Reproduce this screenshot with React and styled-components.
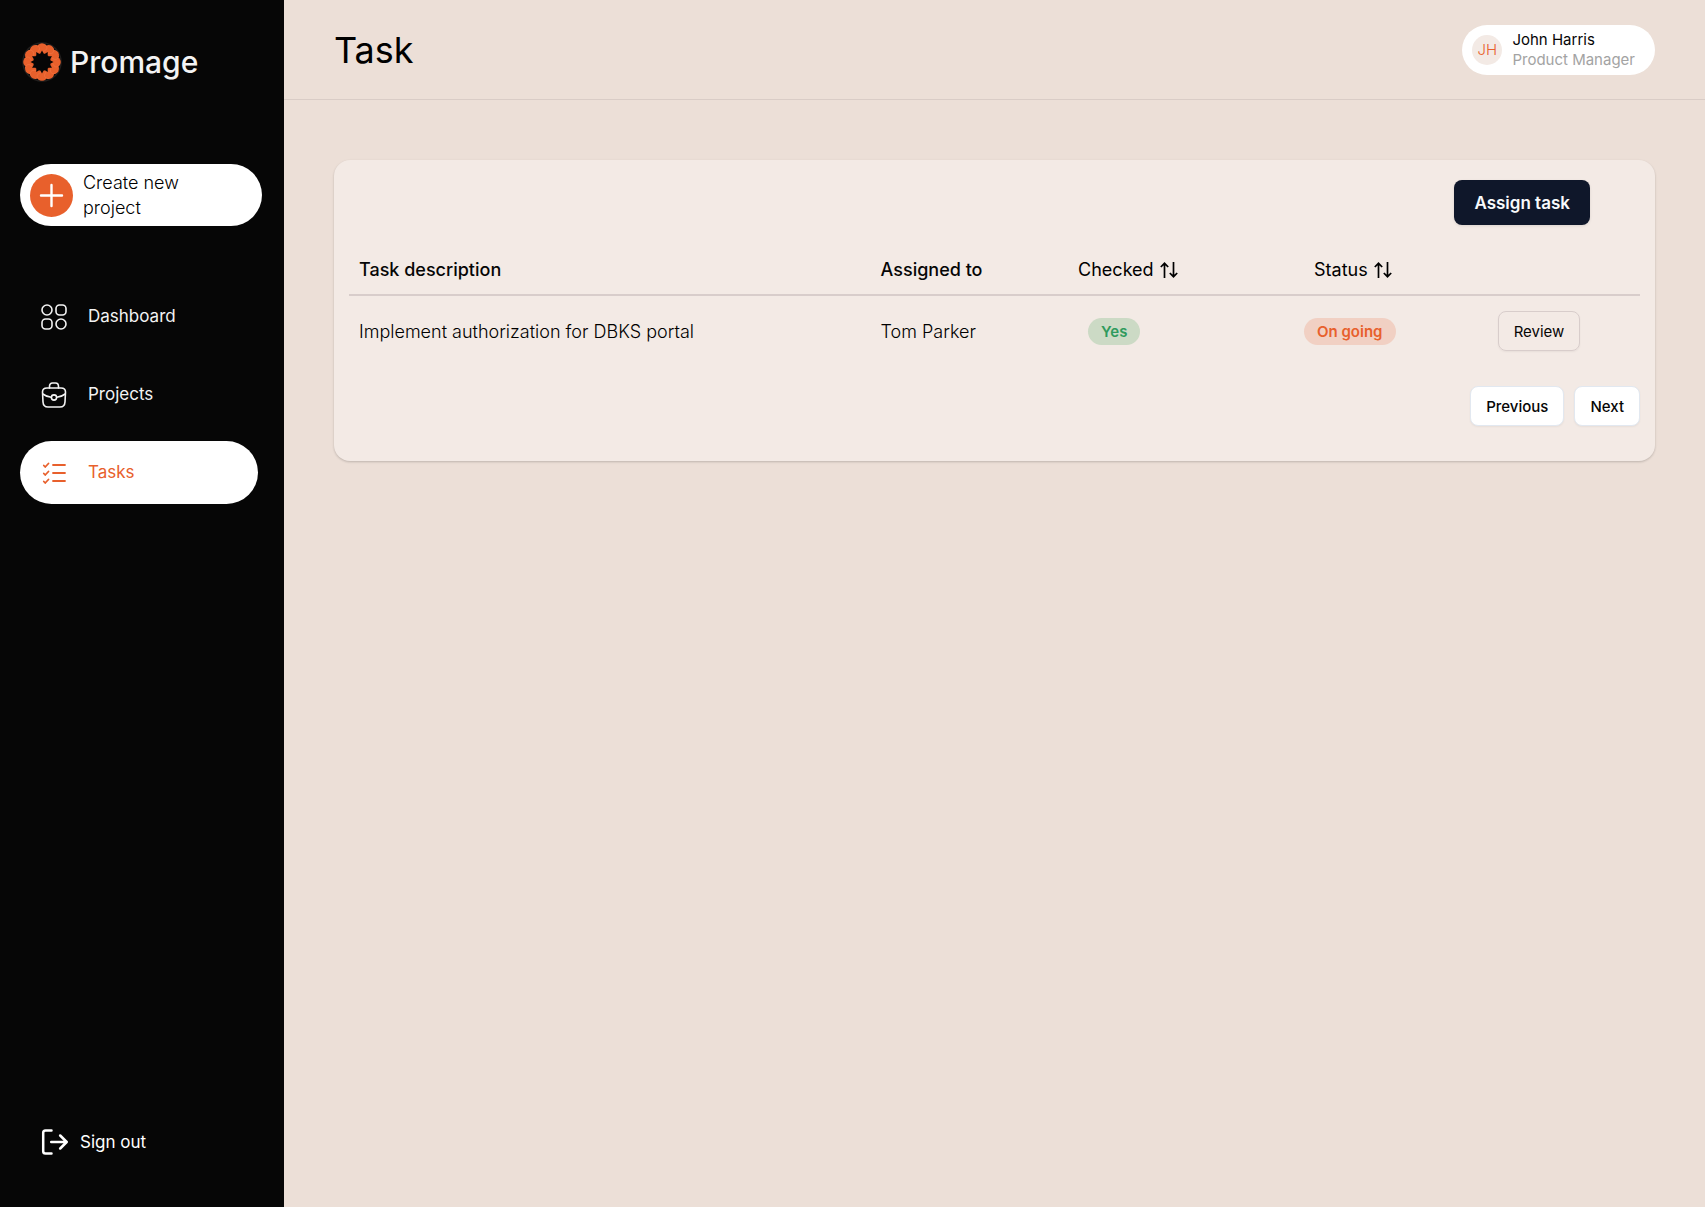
import React from "react";
import styled, { createGlobalStyle } from "styled-components";

const GlobalStyle = createGlobalStyle`
  *, *::before, *::after { box-sizing: border-box; }
  body {
    margin: 0;
    background: #ecdfd7;
    color: #060606;
    font-family: Inter, "Liberation Sans", sans-serif;
    font-size: 18px;
    font-weight: 400;
  }
  button { font-family: inherit; cursor: pointer; }
  h1, p { margin: 0; }
`;

const Layout = styled.div`
  display: grid;
  grid-template-columns: 284px minmax(0, 1fr);
  min-height: 100vh;
`;

const Sidebar = styled.aside`
  display: flex;
  flex-direction: column;
  padding: 40px 22px 43px 20px;
  background: #060606;
  color: #f3f3f3;
`;

const Brand = styled.a`
  display: flex;
  align-items: center;
  gap: 6px;
  height: 44px;
  color: inherit;
  font-size: 30px;
  font-weight: 500;
  text-decoration: none;
`;

const CreateButton = styled.button`
  display: flex;
  align-items: center;
  gap: 10px;
  height: 62px;
  margin-top: 80px;
  padding: 0 70px 0 10px;
  border: 0;
  border-radius: 31px;
  background: #fff;
  color: #000;
  font-size: 18px;
  line-height: 25px;
  font-weight: 300;
  text-align: left;

  svg { flex: none; }
`;

const Nav = styled.nav`
  display: flex;
  flex-direction: column;
  gap: 15px;
  margin-top: 59px;
`;

const NavLink = styled.a`
  display: flex;
  align-items: center;
  gap: 20px;
  height: 63px;
  margin-right: 4px;
  padding: 0 20px;
  border-radius: 32px;
  background: ${(p) => (p.$active ? "#fff" : "transparent")};
  color: ${(p) => (p.$active ? "#e8602c" : "#f3f3f3")};
  font-size: 17px;
  line-height: 25px;
  text-decoration: none;
`;

const SignOut = styled.button`
  display: flex;
  align-items: center;
  gap: 12px;
  margin-top: auto;
  padding: 8px 20px;
  border: 0;
  background: none;
  color: #fff;
  font-size: 17px;
`;

const Header = styled.header`
  display: flex;
  align-items: center;
  justify-content: space-between;
  height: 100px;
  padding: 0 50px;
  border-bottom: 1px solid #d9ccc6;
`;

const Title = styled.h1`
  color: #000;
  font-size: 36px;
  font-weight: 400;
`;

const User = styled.div`
  display: flex;
  align-items: center;
  gap: 10px;
  height: 50px;
  padding: 0 20px 0 10px;
  border-radius: 25px;
  background: #fff;
  font-size: 15px;
  line-height: 20px;
`;

const Avatar = styled.span`
  display: grid;
  place-items: center;
  width: 30px;
  height: 30px;
  border-radius: 50%;
  background: #f3eae5;
  color: #e8602c;
  font-weight: 300;
`;

const Role = styled.p`
  color: #a3a3a3;
`;

const Card = styled.section`
  margin: 60px 50px;
  padding: 20px 15px 35px;
  border-radius: 16px;
  background: #f3eae5;
  box-shadow: 0 1px 3px rgba(0, 0, 0, 0.1), 0 1px 2px rgba(0, 0, 0, 0.1);
`;

const Actions = styled.div`
  display: flex;
  justify-content: flex-end;
  padding-right: 50px;
`;

const AssignButton = styled.button`
  height: 45px;
  padding: 0 20px;
  border: 0;
  border-radius: 8px;
  background: #0f172a;
  color: #f8fafc;
  font-size: 17px;
  font-weight: 600;
  box-shadow: 0 1px 3px rgba(0, 0, 0, 0.1);
`;

const Table = styled.table`
  width: 100%;
  margin-top: 20px;
  border-collapse: collapse;
  table-layout: fixed;
`;

const HeadCell = styled.th`
  width: ${(p) => p.$width};
  height: 50px;
  padding: 0 10px;
  padding-left: ${(p) => (p.$inset ? "20px" : "10px")};
  border-bottom: 2px solid #d8cdcb;
  font-weight: 500;
  text-align: left;
`;

const SortButton = styled.button`
  display: flex;
  align-items: center;
  gap: 6px;
  padding: 0;
  border: 0;
  background: none;
  color: #000;
  font-size: 18px;
  font-weight: 400;
`;

const Cell = styled.td`
  height: 71px;
  padding: 0 10px;
  padding-left: ${(p) => (p.$inset ? "20px" : "10px")};
  color: #000;
  font-weight: 300;
`;

const Badge = styled.span`
  display: inline-flex;
  align-items: center;
  height: 27px;
  padding: 0 13px;
  border-radius: 14px;
  background: ${(p) => (p.$tone === "green" ? "#ccdac5" : "#f1d0c3")};
  color: ${(p) => (p.$tone === "green" ? "#2f9a5d" : "#e8602c")};
  font-size: 15px;
  font-weight: 600;
  vertical-align: middle;
`;

const SmallButton = styled.button`
  height: 40px;
  padding: 0 15px;
  border: 1px solid ${(p) => (p.$plain ? "#d8cdcb" : "#e2e8f0")};
  border-radius: 8px;
  background: ${(p) => (p.$plain ? "transparent" : "#fff")};
  color: #060606;
  font-size: 15px;
  font-weight: ${(p) => (p.$plain ? 400 : 500)};
  vertical-align: middle;
  box-shadow: 0 1px 2px rgba(0, 0, 0, 0.05);
`;

const Pager = styled.div`
  display: flex;
  justify-content: flex-end;
  gap: 10px;
  margin-top: 20px;
`;

const petals = Array.from({ length: 12 }, (_, i) => i * 30);

const starPoints = Array.from({ length: 24 }, (_, i) => {
  const r = i % 2 ? 8 : 11.5;
  const a = (i * Math.PI) / 12;
  return `${(22 + r * Math.cos(a)).toFixed(2)},${(22 + r * Math.sin(a)).toFixed(2)}`;
}).join(" ");

const Logo = () => (
  <svg width="44" height="44" viewBox="0 0 44 44" aria-hidden="true">
    <circle cx="22" cy="22" r="19" fill="none" stroke="#4a4442" strokeWidth="1.5" opacity=".4" />
    {petals.map((a) => (
      <circle key={a} cx="22" cy="8.600" r="5.400" transform={`rotate(${a} 22 22)`} fill="#e8602c" />
    ))}
    {petals.map((a) => (
      <path
        key={a}
        transform={`rotate(${a} 22 22)`}
        d="M25 4.500C28 7 27.500 10 23 11.500"
        fill="none"
        stroke="#f47a48"
        strokeWidth=".5"
      />
    ))}
    <polygon points={starPoints} fill="#060606" />
  </svg>
);

const PlusIcon = () => (
  <svg width="43" height="43" viewBox="0 0 43 43" aria-hidden="true">
    <circle cx="21.5" cy="21.5" r="21.5" fill="#e8602c" />
    <path d="M21.5 11V32M11 21.500H32" stroke="#fff" strokeWidth="2.4" strokeLinecap="round" />
  </svg>
);

const Icon = ({ width = 1.6, children }) => (
  <svg
    width="28"
    height="28"
    viewBox="0 0 28 28"
    fill="none"
    stroke="currentColor"
    strokeWidth={width}
    strokeLinecap="round"
    strokeLinejoin="round"
    aria-hidden="true"
  >
    {children}
  </svg>
);

const DashboardIcon = () => (
  <Icon>
    <circle cx="7" cy="7" r="5" />
    <rect x="16" y="2" width="10" height="10" rx="3.5" />
    <rect x="2" y="16" width="10" height="10" rx="3.5" />
    <circle cx="21" cy="21" r="5" />
  </Icon>
);

const BriefcaseIcon = () => (
  <Icon>
    <path d="M9.500 7V5.500C9.500 3.500 10.500 2 12.500 2H15.500C17.500 2 18.500 3.500 18.500 5.500V7" />
    <path d="M7 7H21C24 7 25.500 8.500 25.500 11L25 21C24.800 24.500 23 26 20 26H8C5 26 3.200 24.500 3 21L2.500 11C2.500 8.500 4 7 7 7Z" />
    <path d="M2.800 13C5.500 15 8 16 11.200 16.300M25.200 13C22.500 15 20 16 16.800 16.300" />
    <circle cx="14" cy="16.500" r="2.600" />
  </Icon>
);

const TasksIcon = () => (
  <Icon width={1.8}>
    <path d="M13 6H25M13 14H25M13 22H25" />
    <path d="M3.800 6.500L5.200 8L8.500 4.500M3.800 14.500L5.200 16L8.500 12.500M3.800 22.500L5.200 24L8.500 20.500" />
  </Icon>
);

const SignOutIcon = () => (
  <Icon width={2.5}>
    <path d="M11.500 2.500H5.500C4 2.500 3.200 3.300 3.200 4.800V23.200C3.200 24.700 4 25.500 5.500 25.500H11.500" />
    <path d="M11.200 14H26.500M20.200 7.500L26.700 14L20.200 20.500" />
  </Icon>
);

const SortIcon = () => (
  <svg width="18" height="18" viewBox="0 0 18 18" fill="none" stroke="currentColor" strokeWidth="1.7" aria-hidden="true">
    <path d="M4.500 17V2M.8 6L4.500 2.300L8.200 6M13.500 1V16M9.800 12L13.500 15.700L17.200 12" />
  </svg>
);

const links = [
  { label: "Dashboard", icon: DashboardIcon },
  { label: "Projects", icon: BriefcaseIcon },
  { label: "Tasks", icon: TasksIcon, active: true },
];

const tasks = [
  { description: "Implement authorization for DBKS portal", assignee: "Tom Parker", checked: "Yes", status: "On going" },
];

export default function App() {
  return (
    <Layout>
      <GlobalStyle />
      <Sidebar>
        <Brand href="#">
          <Logo />
          Promage
        </Brand>
        <CreateButton type="button">
          <PlusIcon />
          Create new project
        </CreateButton>
        <Nav>
          {links.map(({ label, icon: LinkIcon, active }) => (
            <NavLink key={label} href="#" $active={active} aria-current={active ? "page" : undefined}>
              <LinkIcon />
              {label}
            </NavLink>
          ))}
        </Nav>
        <SignOut type="button">
          <SignOutIcon />
          Sign out
        </SignOut>
      </Sidebar>
      <main>
        <Header>
          <Title>Task</Title>
          <User>
            <Avatar>JH</Avatar>
            <div>
              <p>John Harris</p>
              <Role>Product Manager</Role>
            </div>
          </User>
        </Header>
        <Card>
          <Actions>
            <AssignButton type="button">Assign task</AssignButton>
          </Actions>
          <Table>
            <thead>
              <tr>
                <HeadCell $width="40.4%">Task description</HeadCell>
                <HeadCell $width="15.3%">Assigned to</HeadCell>
                <HeadCell $width="17.5%">
                  <SortButton type="button">Checked <SortIcon /></SortButton>
                </HeadCell>
                <HeadCell $width="15%" $inset>
                  <SortButton type="button">Status <SortIcon /></SortButton>
                </HeadCell>
                <HeadCell $width="11.8%" />
              </tr>
            </thead>
            <tbody>
              {tasks.map((t) => (
                <tr key={t.description}>
                  <Cell>{t.description}</Cell>
                  <Cell>{t.assignee}</Cell>
                  <Cell $inset><Badge $tone="green">{t.checked}</Badge></Cell>
                  <Cell><Badge>{t.status}</Badge></Cell>
                  <Cell><SmallButton type="button" $plain>Review</SmallButton></Cell>
                </tr>
              ))}
            </tbody>
          </Table>
          <Pager>
            <SmallButton type="button">Previous</SmallButton>
            <SmallButton type="button">Next</SmallButton>
          </Pager>
        </Card>
      </main>
    </Layout>
  );
}
